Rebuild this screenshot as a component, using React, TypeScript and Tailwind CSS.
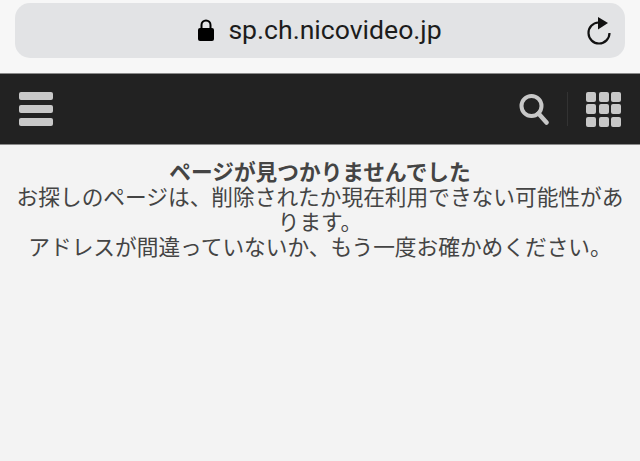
import React from 'react';

const App: React.FC = () => {
  return (
    <div className="w-[640px] h-[461px] overflow-hidden flex flex-col bg-[#f3f3f3] font-['Roboto','Noto_Sans_CJK_JP',sans-serif]">
      {/* browser bar */}
      <div className="h-[73px] bg-[#f7f7f7] px-[15px] pt-[3px]">
        <div className="relative h-[55px] rounded-[15px] bg-[#e2e3e5] flex items-center justify-center text-black">
          <svg width="16" height="22" viewBox="0 0 16 22" className="mr-[14px] mt-[-1px]">
            <path d="M3.500 10V6a4.500 4.500 0 0 1 9 0v4" fill="none" stroke="#000" strokeWidth="2" />
            <rect x="0" y="9" width="16" height="13" rx="2" fill="#000" />
          </svg>
          <span className="text-[26.6px] leading-none text-[#1c1c1c]">sp.ch.nicovideo.jp</span>
          <svg width="26" height="28" viewBox="0 0 26 28" className="absolute right-[13px] top-[14px]">
            <path d="M12.500 5.500a10.500 10.500 0 1 0 11 10.500" fill="none" stroke="#111" strokeWidth="2.200" />
            <path d="M12 0l10 6-10 6.500z" fill="#111" />
          </svg>
        </div>
      </div>

      {/* site nav */}
      <div className="h-[72px] bg-[#222222] border-y border-[#8a8a8a] flex items-center justify-between pl-[19px] pr-[19px]">
        <div className="flex flex-col gap-[5px]">
          <div className="w-[34px] h-[8px] rounded-[2px] bg-[#c8c8c8]" />
          <div className="w-[34px] h-[8px] rounded-[2px] bg-[#c8c8c8]" />
          <div className="w-[34px] h-[8px] rounded-[2px] bg-[#c8c8c8]" />
        </div>
        <div className="flex items-center">
          <svg width="30" height="32" viewBox="0 0 30 32" className="mr-[18px]">
            <circle cx="12.500" cy="13" r="10" fill="none" stroke="#c8c8c8" strokeWidth="4" />
            <path d="M19.500 20.500l8 9" fill="none" stroke="#c8c8c8" strokeWidth="4.500" strokeLinecap="round" />
          </svg>
          <div className="w-px h-[34px] bg-[#333333] mr-[18px]" />
          <div className="grid grid-cols-3 gap-[2.500px]">
            {Array.from({ length: 9 }, (_, i) => (
              <div key={i} className="w-[10px] h-[10px] rounded-[2px] bg-[#c8c8c8]" />
            ))}
          </div>
        </div>
      </div>

      {/* message */}
      <div className="px-[16px] pt-[15px] text-center text-[21.7px] leading-[25px] text-[#444444]">
        <div className="font-bold">ページが見つかりませんでした</div>
        <div>お探しのページは、削除されたか現在利用できない可能性があります。</div>
        <div>アドレスが間違っていないか、もう一度お確かめください。</div>
      </div>
    </div>
  );
};

export default App;
